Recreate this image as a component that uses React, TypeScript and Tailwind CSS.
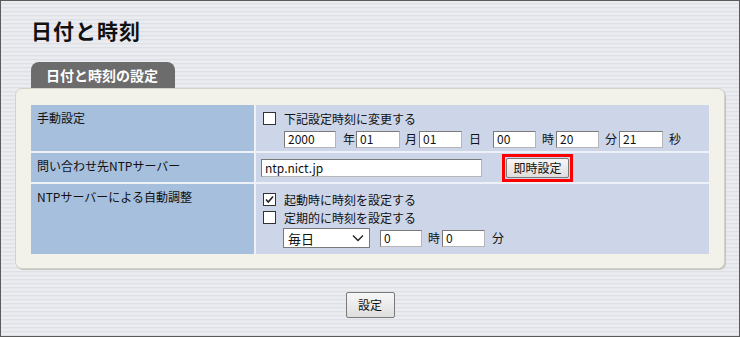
import React from 'react';

function CheckBox({ checked = false }: { checked?: boolean }) {
  return (
    <span className="flex h-[13px] w-[13px] shrink-0 items-center justify-center border border-[#333] bg-white">
      {checked && (
        <svg width="9" height="9" viewBox="0 0 9 9">
          <path d="M1 4.5 L3.3 7 L8 1.5" fill="none" stroke="#222" strokeWidth="1.6" />
        </svg>
      )}
    </span>
  );
}

function TextBox({ value, w }: { value: string; w: string }) {
  return (
    <div className={`flex h-[17px] items-center border border-t-[#7a7a7a] border-l-[#7a7a7a] border-r-[#b5b5b5] border-b-[#b5b5b5] bg-white pl-[3px] text-[12px] leading-none ${w}`}>
      {value}
    </div>
  );
}

function Label({ text }: { text: string }) {
  return <div className="bg-[#a6bfdc] px-[6px] pt-[5px] text-[12px] leading-[16px]">{text}</div>;
}

export default function App() {
  return (
    <div className="h-[337px] w-[740px] overflow-hidden border border-[#5a5a5a] bg-[repeating-linear-gradient(to_bottom,#eaecf0_0px,#eaecf0_2px,#dde0e6_2px,#dde0e6_3px,#e6e8ec_3px,#e6e8ec_4px)] font-['Noto_Sans_CJK_JP',sans-serif] text-[#111]">
      <h1 className="ml-[30px] mt-[17px] text-[21px] font-bold leading-[24px] tracking-[1px]">日付と時刻</h1>

      <div className="ml-[30px] mt-[20px] flex h-[26px] w-[144px] items-center rounded-t-[8px] bg-[#6c6c6c] pl-[15px] text-[14px] font-bold text-white">
        日付と時刻の設定
      </div>

      <div className="mx-[14px] rounded-[7px] border border-[#d2d2c8] bg-[#f2f2eb] px-[15px] pb-[14px] pt-[16px] shadow-[1px_1px_0_#c4c4bc]">
        <div className="grid grid-cols-[223px_1fr] gap-[2px] bg-[#eef1f7]">
          {/* 手動設定 */}
          <Label text="手動設定" />
          <div className="h-[46px] bg-[#cdd5e9] pl-[7px] pt-[7px] text-[12px]">
            <div className="flex h-[13px] items-center gap-[8px]">
              <CheckBox />
              <span className="leading-none">下記設定時刻に変更する</span>
            </div>
            <div className="ml-[21px] mt-[5px] flex items-center">
              <TextBox value="2000" w="w-[52px]" />
              <span className="ml-[7px] w-[13px]">年</span>
              <TextBox value="01" w="w-[44px]" />
              <span className="ml-[5px] w-[14px]">月</span>
              <TextBox value="01" w="w-[43px]" />
              <span className="ml-[7px] w-[24px]">日</span>
              <TextBox value="00" w="w-[43px]" />
              <span className="ml-[6px] w-[14px]">時</span>
              <TextBox value="20" w="w-[43px]" />
              <span className="ml-[6px] w-[14px]">分</span>
              <TextBox value="21" w="w-[44px]" />
              <span className="ml-[6px]">秒</span>
            </div>
          </div>

          {/* NTPサーバー */}
          <Label text="問い合わせ先NTPサーバー" />
          <div className="flex h-[29px] items-center bg-[#cdd5e9] pl-[5px]">
            <TextBox value="ntp.nict.jp" w="w-[221px] h-[18px]" />
            <div className="ml-[20px] border-[3px] border-[#ff0000] p-px">
              <div className="flex h-[20px] w-[63px] items-center justify-center rounded-[2px] border border-[#7a7a7a] bg-[linear-gradient(to_bottom,#f7f7f7,#dedede)] text-[12px]">
                即時設定
              </div>
            </div>
          </div>

          {/* 自動調整 */}
          <Label text="NTPサーバーによる自動調整" />
          <div className="h-[70px] bg-[#cdd5e9] pl-[7px] pt-[9px] text-[12px]">
            <div className="flex h-[13px] items-center gap-[8px]">
              <CheckBox checked />
              <span className="leading-none">起動時に時刻を設定する</span>
            </div>
            <div className="mt-[5px] flex h-[13px] items-center gap-[8px]">
              <CheckBox />
              <span className="leading-none">定期的に時刻を設定する</span>
            </div>
            <div className="ml-[20px] mt-[4px] flex items-center">
              <div className="flex h-[20px] w-[87px] items-center justify-between border border-[#7a7a7a] bg-white pl-[4px] pr-[5px] text-[13px]">
                <span className="leading-none">毎日</span>
                <svg width="12" height="8" viewBox="0 0 12 8">
                  <path d="M1 1.5 L6 6.5 L11 1.5" fill="none" stroke="#222" strokeWidth="1.4" />
                </svg>
              </div>
              <TextBox value="0" w="ml-[10px] w-[42px]" />
              <span className="ml-[6px] w-[14px]">時</span>
              <TextBox value="0" w="w-[43px]" />
              <span className="ml-[7px]">分</span>
            </div>
          </div>
        </div>
      </div>

      <div className="mt-[23px] flex justify-center">
        <div className="flex h-[26px] w-[49px] items-center justify-center rounded-[2px] border border-[#7a7a7a] bg-[linear-gradient(to_bottom,#f7f7f7,#dedede)] text-[12px]">
          設定
        </div>
      </div>
    </div>
  );
}
